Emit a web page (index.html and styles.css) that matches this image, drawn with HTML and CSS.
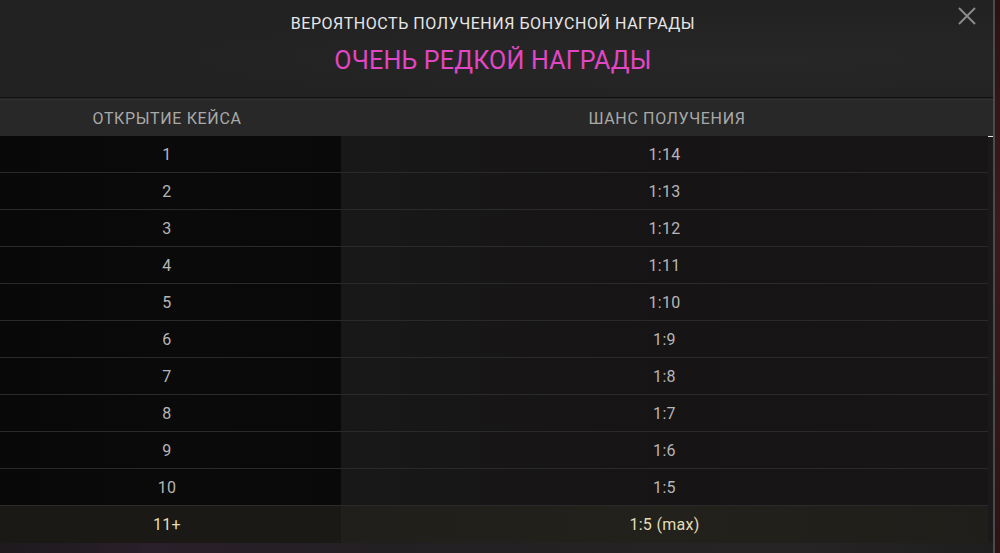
FILE: index.html
```html
<!DOCTYPE html>
<html lang="ru">
<head>
  <meta charset="UTF-8">
  <title>Вероятность получения бонусной награды</title>
  <link rel="stylesheet" href="styles.css">
</head>
<body>
  <div class="page">
    <div class="modal">
      <div class="header">
        <div class="title">Вероятность получения бонусной награды</div>
        <div class="subtitle">Очень редкой награды</div>
        <button class="close" aria-label="Закрыть">
          <svg width="20" height="20" viewBox="0 0 20 20">
            <path d="M2 2 L18 18 M18 2 L2 18" stroke="#8a8a8a" stroke-width="2" fill="none"/>
          </svg>
        </button>
      </div>
      <div class="divider"></div>
      <div class="table">
        <div class="thead">
          <div class="cell">Открытие кейса</div>
          <div class="cell">Шанс получения</div>
        </div>
        <div class="tbody">
          <div class="rows">
            <div class="row"><div class="cell">1</div><div class="cell">1:14</div></div>
            <div class="row"><div class="cell">2</div><div class="cell">1:13</div></div>
            <div class="row"><div class="cell">3</div><div class="cell">1:12</div></div>
            <div class="row"><div class="cell">4</div><div class="cell">1:11</div></div>
            <div class="row"><div class="cell">5</div><div class="cell">1:10</div></div>
            <div class="row"><div class="cell">6</div><div class="cell">1:9</div></div>
            <div class="row"><div class="cell">7</div><div class="cell">1:8</div></div>
            <div class="row"><div class="cell">8</div><div class="cell">1:7</div></div>
            <div class="row"><div class="cell">9</div><div class="cell">1:6</div></div>
            <div class="row"><div class="cell">10</div><div class="cell">1:5</div></div>
            <div class="row last"><div class="cell">11+</div><div class="cell">1:5 (max)</div></div>
          </div>
          <div class="scrollbar"><div class="thumb"></div></div>
        </div>
      </div>
      <div class="footer"></div>
    </div>
    <div class="edge"></div>
  </div>
</body>
</html>
```

FILE: styles.css
```css
html, body {
  margin: 0;
  height: 100%;
  overflow: hidden;
}

body {
  background: #1c1a1b;
  font-family: Roboto, "Liberation Sans", sans-serif;
}

.page {
  display: flex;
  height: 553px;
}

.modal {
  flex: 1;
  display: flex;
  flex-direction: column;
  background: #232323;
}

.edge {
  width: 5px;
  border-left: 2px solid #4c4a4b;
  background: linear-gradient(#2a1214, #3a1a1e 40%, #2a1416);
}

.header {
  position: relative;
  height: 97px;
  padding-right: 7px;
  display: flex;
  flex-direction: column;
  align-items: center;
  background: radial-gradient(ellipse at 75% 60%, #272727, #222222 60%);
}

.title {
  margin-top: 14px;
  color: #e6e6e6;
  font-size: 16px;
  line-height: 20px;
  text-transform: uppercase;
  letter-spacing: 0.55px;
}

.subtitle {
  margin-top: 12px;
  color: #e246c4;
  font-size: 25px;
  line-height: 30px;
  text-transform: uppercase;
  letter-spacing: 0.2px;
}

.close {
  position: absolute;
  top: 6px;
  right: 16px;
  padding: 0;
  border: 0;
  background: none;
  width: 20px;
  height: 20px;
}

.close svg {
  display: block;
}

.divider {
  height: 1px;
  border-top: 1px solid #131313;
  border-bottom: 1px solid #323232;
}

.thead {
  display: grid;
  grid-template-columns: 341px 1fr;
  height: 36px;
  background: #282828;
  color: #a9a9a9;
  font-size: 16px;
  text-transform: uppercase;
  letter-spacing: 0.65px;
}

.thead .cell {
  display: flex;
  align-items: center;
  justify-content: center;
}

.thead .cell:first-child {
  padding-right: 7px;
}

.tbody {
  display: flex;
}

.rows {
  flex: 1;
}

.row {
  display: grid;
  grid-template-columns: 341px 1fr;
  height: 36px;
  border-bottom: 1px solid #2b2a2a;
  color: #b6b6b6;
  font-size: 16px;
  letter-spacing: 0.3px;
}

.row .cell {
  display: flex;
  align-items: center;
  justify-content: center;
}

.row .cell:first-child {
  padding-right: 7px;
  background: linear-gradient(90deg, #080808, #0b0a0a 50%, #0a0909);
}

.row .cell:last-child {
  background: linear-gradient(90deg, #191818, #161414 50%, #171515);
}

.row.last {
  border-bottom: 0;
  height: 37px;
  color: #e4dcb6;
}

.row.last .cell:first-child {
  background: #1a1915;
}

.row.last .cell:last-child {
  background: linear-gradient(90deg, #201f1b, #22211c 50%, #1f1e1a);
}

.scrollbar {
  width: 5px;
  background: #1b1a1a;
}

.thumb {
  height: 1px;
  background: #e8e8e8;
}

.footer {
  flex: 1;
  background: linear-gradient(90deg, #1d1a1d, #2a1f2a 15%, #222022 40%, #262424 80%, #1f1e1e);
}
```
